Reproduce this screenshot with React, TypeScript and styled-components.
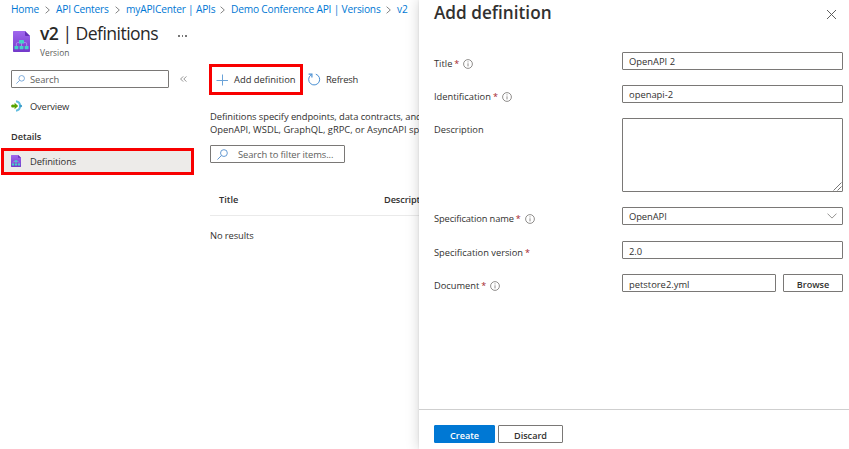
import React from "react";
import styled, { createGlobalStyle } from "styled-components";

const GlobalStyle = createGlobalStyle`
  * { box-sizing: border-box; }
  html, body { margin: 0; padding: 0; background: #fff; overflow: hidden; }
  body { font-family: "Open Sans", "Noto Sans", sans-serif; font-size: 9.4px; color: #323130; }
  input, textarea, button { font: inherit; color: inherit; margin: 0; outline: none; border-radius: 1px; }
`;

const Page = styled.div`
  position: relative;
  width: 849px;
  height: 449px;
  overflow: hidden;
  background: #fff;
`;

const Text = styled.span<{ $ls?: number }>`
  white-space: nowrap;
  letter-spacing: ${(p) => p.$ls ?? 0}px;
`;

const Breadcrumbs = styled.nav`
  display: flex;
  align-items: center;
  height: 18px;
  padding-left: 11px;
  font-size: 10.2px;
`;

const Crumb = styled.a<{ $w: number }>`
  width: ${(p) => p.$w}px;
  flex: none;
  line-height: 14px;
  white-space: nowrap;
  letter-spacing: -0.2px;
  color: #0078d4;
`;

const CrumbArrow = styled.svg`
  width: 5px;
  height: 8px;
  margin: 1px 6px 0 6px;
  flex: none;
`;

const Header = styled.header`
  display: flex;
  height: 46px;
  padding: 5px 0 0 13px;
`;

const HeaderIcon = styled.div`
  width: 27px;
  padding-top: 8px;
`;

const Heading = styled.h1`
  margin: 0;
  width: 118px;
  height: 23px;
  line-height: 21px;
  font-size: 17.6px;
  font-weight: 400;
  white-space: nowrap;
  letter-spacing: -0.55px;
  color: #292827;
  b { font-weight: 600; }
`;

const Subtitle = styled.div`
  line-height: 13px;
  font-size: 8.4px;
  color: #605e5c;
`;

const More = styled.div`
  display: flex;
  gap: 2px;
  margin: 12px 0 0 20px;
  i { width: 1.5px; height: 1.5px; background: #777; }
`;

const Body = styled.div`
  display: flex;
`;

const Sidebar = styled.aside`
  width: 209px;
  flex: none;
  padding-top: 6px;
`;

const SearchRow = styled.div`
  display: flex;
  align-items: center;
  padding-left: 11px;
  height: 18px;
  gap: 11px;
`;

const SearchBox = styled.div<{ $w: number; $gap: number }>`
  display: flex;
  align-items: center;
  gap: ${(p) => p.$gap}px;
  width: ${(p) => p.$w}px;
  height: 18px;
  padding-left: ${(p) => (p.$gap > 6 ? 6 : 4)}px;
  border: 1px solid #7a7876;
  border-radius: 1px;
  color: #605e5c;
  svg { flex: none; }
`;

const NavItem = styled.div`
  display: flex;
  align-items: center;
  height: 20px;
  margin-top: 9px;
  padding: 0 0 2px 11px;
  gap: 7px;
`;

const NavGroup = styled.div`
  margin-top: 11px;
  padding-left: 11px;
  height: 19px;
  line-height: 17px;
  font-weight: 600;
  font-size: 9.2px;
`;

const SelectedItem = styled.div`
  display: flex;
  align-items: center;
  width: 193px;
  height: 27px;
  margin: 1px 0 0 1px;
  padding: 0 0 1px 7px;
  gap: 9px;
  border: 3px solid #f80000;
  background: #edebe9;
`;

const Main = styled.main`
  width: 640px;
  flex: none;
`;

const Toolbar = styled.div`
  display: flex;
  height: 31px;
`;

const ToolButton = styled.div<{ $marked?: boolean }>`
  display: flex;
  align-items: center;
  gap: ${(p) => (p.$marked ? 6 : 5)}px;
  width: ${(p) => (p.$marked ? "94px" : "auto")};
  height: 31px;
  padding-left: 4px;
  border: ${(p) => (p.$marked ? "3px solid #f80000" : "0")};
`;

const Intro = styled.p`
  margin: 15px 0 9px 1px;
  line-height: 13px;
  font-size: 9.4px;
  white-space: nowrap;
`;

const FilterWrap = styled.div`
  margin-left: 1px;
`;

const TableHead = styled.div`
  display: grid;
  grid-template-columns: 165px 1fr;
  align-items: center;
  height: 32px;
  margin: 21px 0 0 1px;
  padding-left: 9px;
  border-bottom: 1px solid #eaeaea;
  font-weight: 600;
  font-size: 9.2px;
`;

const Empty = styled.div`
  margin-left: 1px;
  height: 40px;
  line-height: 40px;
`;

const Panel = styled.section`
  position: absolute;
  left: 419px;
  top: 0;
  width: 430px;
  height: 449px;
  display: flex;
  flex-direction: column;
  background: #fff;
  box-shadow: 0 0 13px rgba(0, 0, 0, 0.18), 0 0 2px rgba(0, 0, 0, 0.1);
`;

const PanelHeader = styled.div`
  display: flex;
  justify-content: space-between;
  height: 52px;
  padding: 0 12px 0 15px;
  svg { margin-top: 9px; }
`;

const PanelTitle = styled.h2`
  margin: 0;
  line-height: 26px;
  font-size: 17.2px;
  font-weight: 600;
  color: #323130;
  white-space: nowrap;
`;

const Form = styled.form`
  flex: 1;
  padding-left: 15px;
`;

const Field = styled.div<{ $h: number }>`
  display: grid;
  grid-template-columns: 188px 221px;
  align-items: start;
  height: ${(p) => p.$h}px;
`;

const FieldLabel = styled.label`
  display: flex;
  align-items: center;
  height: 14px;
  margin-top: 4px;
  font-size: 9.3px;
  letter-spacing: -0.09px;
  svg { margin: 1px 0 0 4px; }
`;

const Required = styled.span`
  margin-left: 2px;
  font-size: 9px;
  color: #a4262c;
`;

const Input = styled.input<{ $drop?: number }>`
  width: 100%;
  height: 18px;
  padding: ${(p) => p.$drop ?? 0}px 6px 0;
  border: 1px solid #7a7876;
  background: #fff;
  line-height: 14px;
`;

const Area = styled.textarea`
  display: block;
  width: 100%;
  height: 74px;
  resize: none;
  border: 1px solid #7a7876;
  background: #fff;
`;

const AreaWrap = styled.div`
  position: relative;
  svg { position: absolute; right: 1px; bottom: 1px; }
`;

const Select = styled.div`
  display: flex;
  align-items: center;
  justify-content: space-between;
  height: 18px;
  padding: 0 5px 0 6px;
  border: 1px solid #7a7876;
  border-radius: 1px;
`;

const FileRow = styled.div`
  display: grid;
  grid-template-columns: 154px 60px;
  gap: 7px;
`;

const Button = styled.button<{ $primary?: boolean; $w: number }>`
  width: ${(p) => p.$w}px;
  height: 18px;
  padding: 3px 0 0;
  line-height: 13px;
  font-weight: 600;
  font-size: 9.1px;
  border: 1px solid ${(p) => (p.$primary ? "#0078d4" : "#7a7876")};
  background: ${(p) => (p.$primary ? "#0078d4" : "#fff")};
  color: ${(p) => (p.$primary ? "#fff" : "#323130")};
`;

const Footer = styled.footer`
  display: flex;
  gap: 3px;
  height: 40px;
  padding: 15px 0 0 15px;
  border-top: 1px solid #cfcfcf;
`;

const Arrow = () => (
  <CrumbArrow viewBox="0 0 5 8" fill="none" stroke="#777" strokeWidth="0.9">
    <path d="M.6.7 4.3 4 .6 7.3" />
  </CrumbArrow>
);

const Magnifier = ({ size = 9 }: { size?: number }) => (
  <svg width={size} height={size} viewBox="0 0 10 10" fill="none" stroke="#5a93cf" strokeWidth="0.85">
    <circle cx="6.3" cy="3.7" r="3.1" />
    <path d="M4 6 .4 9.6" />
  </svg>
);

const FileIcon = ({ w, h }: { w: number; h: number }) => (
  <svg width={w} height={h} viewBox="0 0 17 21" preserveAspectRatio="none">
    <defs>
      <linearGradient id="filePurple" x1="0" y1="0" x2="0" y2="1">
        <stop offset="0" stopColor="#a067ee" />
        <stop offset="1" stopColor="#7338ca" />
      </linearGradient>
    </defs>
    <path d="M.8 0H12l5 5v15.2a.8.8 0 0 1-.8.8H.8a.8.8 0 0 1-.8-.8V.8A.8.8 0 0 1 .8 0Z" fill="url(#filePurple)" />
    <path d="M12 0v4.2a.8.8 0 0 0 .8.8H17Z" fill="#6530b8" />
    <path d="M3.3 15.5v-2.6q0-1.3 1.3-1.3h7.8q1.3 0 1.3 1.3v2.6M8.5 11v4" fill="none" stroke="#b79af0" strokeWidth="0.8" />
    <rect x="6" y="9" width="5" height="3.6" rx=".5" fill="#42d4c7" />
    <rect x="1.5" y="15" width="3.8" height="3.2" rx=".4" fill="#42d4c7" />
    <rect x="6.6" y="15" width="3.8" height="3.2" rx=".4" fill="#42d4c7" />
    <rect x="11.7" y="15" width="3.8" height="3.2" rx=".4" fill="#42d4c7" />
  </svg>
);

const OverviewIcon = () => (
  <svg width="12" height="12" viewBox="0 0 12 12">
    <path d="M5 1.3A4.75 4.75 0 0 1 5 10.7" fill="none" stroke="#62bde0" strokeWidth="2" />
    <circle cx="9.8" cy="6" r="1.3" fill="#3c9dca" />
    <circle cx="1.7" cy="6" r="1.6" fill="#57a300" />
    <path d="M1.7 4.8H3.6V2.8L7.2 6 3.6 9.2V7.2H1.7Z" fill="#57a300" />
  </svg>
);

const Info = () => (
  <svg width="10" height="10" viewBox="0 0 10 10" fill="none" stroke="#74716e" strokeWidth="0.8">
    <circle cx="5" cy="5" r="4.4" />
    <path d="M5 4.3v3.1M5 2.4v1" />
  </svg>
);

const PlusIcon = () => (
  <svg width="12" height="12" viewBox="0 0 12 12" stroke="#6ba3d8" strokeWidth="1">
    <path d="M6.5.5v11M.5 6.5h11.5" />
  </svg>
);

const RefreshIcon = () => (
  <svg width="14" height="13" viewBox="0 0 14 13" fill="none" stroke="#4a8fd2" strokeWidth="1">
    <path d="M8.8 1.2A5.5 5.5 0 1 1 3.8 2.1" />
    <path d="M1.6 1.2h3.3v3.2" strokeWidth="1.2" />
  </svg>
);

export default function App() {
  return (
    <>
      <GlobalStyle />
      <Page>
        <Breadcrumbs>
          <Crumb $w={28}>Home</Crumb>
          <Arrow />
          <Crumb $w={53}>API Centers</Crumb>
          <Arrow />
          <Crumb $w={88}>myAPICenter | APIs</Crumb>
          <Arrow />
          <Crumb $w={149}>Demo Conference API | Versions</Crumb>
          <Arrow />
          <Crumb $w={12}>v2</Crumb>
        </Breadcrumbs>
        <Header>
          <HeaderIcon><FileIcon w={17} h={21} /></HeaderIcon>
          <div>
            <Heading><b>v2</b> | Definitions</Heading>
            <Subtitle>Version</Subtitle>
          </div>
          <More><i /><i /><i /></More>
        </Header>
        <Body>
          <Sidebar>
            <SearchRow>
              <SearchBox $w={158} $gap={5}><Magnifier /><Text $ls={-0.1}>Search</Text></SearchBox>
              <svg width="7" height="6" viewBox="0 0 7 6" fill="none" stroke="#777" strokeWidth="0.8">
                <path d="M3.2.4.6 3l2.6 2.6M6.4.4 3.8 3l2.6 2.6" />
              </svg>
            </SearchRow>
            <NavItem><OverviewIcon /><Text $ls={-0.2}>Overview</Text></NavItem>
            <NavGroup><Text $ls={-0.05}>Details</Text></NavGroup>
            <SelectedItem><FileIcon w={10} h={12} /><Text $ls={-0.1}>Definitions</Text></SelectedItem>
          </Sidebar>
          <Main>
            <Toolbar>
              <ToolButton $marked><PlusIcon /><Text>Add definition</Text></ToolButton>
              <ToolButton><RefreshIcon /><Text $ls={-0.2}>Refresh</Text></ToolButton>
            </Toolbar>
            <Intro>
              <Text $ls={-0.07}>Definitions specify endpoints, data contracts, and</Text><br />
              <Text $ls={0}>OpenAPI, WSDL, GraphQL, gRPC, or AsyncAPI spec</Text>
            </Intro>
            <FilterWrap>
              <SearchBox $w={135} $gap={10}><Magnifier size={11} /><Text $ls={-0.1}>Search to filter items...</Text></SearchBox>
            </FilterWrap>
            <TableHead><Text>Title</Text><Text $ls={-0.1}>Descript</Text></TableHead>
            <Empty><Text $ls={-0.1}>No results</Text></Empty>
          </Main>
        </Body>

        <Panel>
          <PanelHeader>
            <PanelTitle>Add definition</PanelTitle>
            <svg width="11" height="11" viewBox="0 0 11 11" stroke="#555" strokeWidth="0.95">
              <path d="m1 1 9 9M10 1l-9 9" />
            </svg>
          </PanelHeader>
          <Form>
            <Field $h={33}>
              <FieldLabel><Text>Title</Text><Required>*</Required><Info /></FieldLabel>
              <Input defaultValue="OpenAPI 2" />
            </Field>
            <Field $h={33}>
              <FieldLabel><Text>Identification</Text><Required>*</Required><Info /></FieldLabel>
              <Input $drop={1} defaultValue="openapi-2" />
            </Field>
            <Field $h={89}>
              <FieldLabel><Text>Description</Text></FieldLabel>
              <AreaWrap>
                <Area />
                <svg width="9" height="9" viewBox="0 0 9 9" stroke="#555" strokeWidth="0.8">
                  <path d="M.5 8.5l8-8M4.5 8.5l4-4" />
                </svg>
              </AreaWrap>
            </Field>
            <Field $h={34}>
              <FieldLabel><Text $ls={-0.12}>Specification name</Text><Required>*</Required><Info /></FieldLabel>
              <Select>
                <Text $ls={-0.08}>OpenAPI</Text>
                <svg width="10" height="6" viewBox="0 0 10 6" fill="none" stroke="#8a8886" strokeWidth="0.9">
                  <path d="M.5.6 5 5.1 9.5.6" />
                </svg>
              </Select>
            </Field>
            <Field $h={33}>
              <FieldLabel><Text>Specification version</Text><Required>*</Required></FieldLabel>
              <Input $drop={2} defaultValue="2.0" />
            </Field>
            <Field $h={33}>
              <FieldLabel><Text>Document</Text><Required>*</Required><Info /></FieldLabel>
              <FileRow>
                <Input $drop={2} defaultValue="petstore2.yml" />
                <Button type="button" $w={60}>Browse</Button>
              </FileRow>
            </Field>
          </Form>
          <Footer>
            <Button $primary $w={61}>Create</Button>
            <Button $w={65}>Discard</Button>
          </Footer>
        </Panel>
      </Page>
    </>
  );
}
